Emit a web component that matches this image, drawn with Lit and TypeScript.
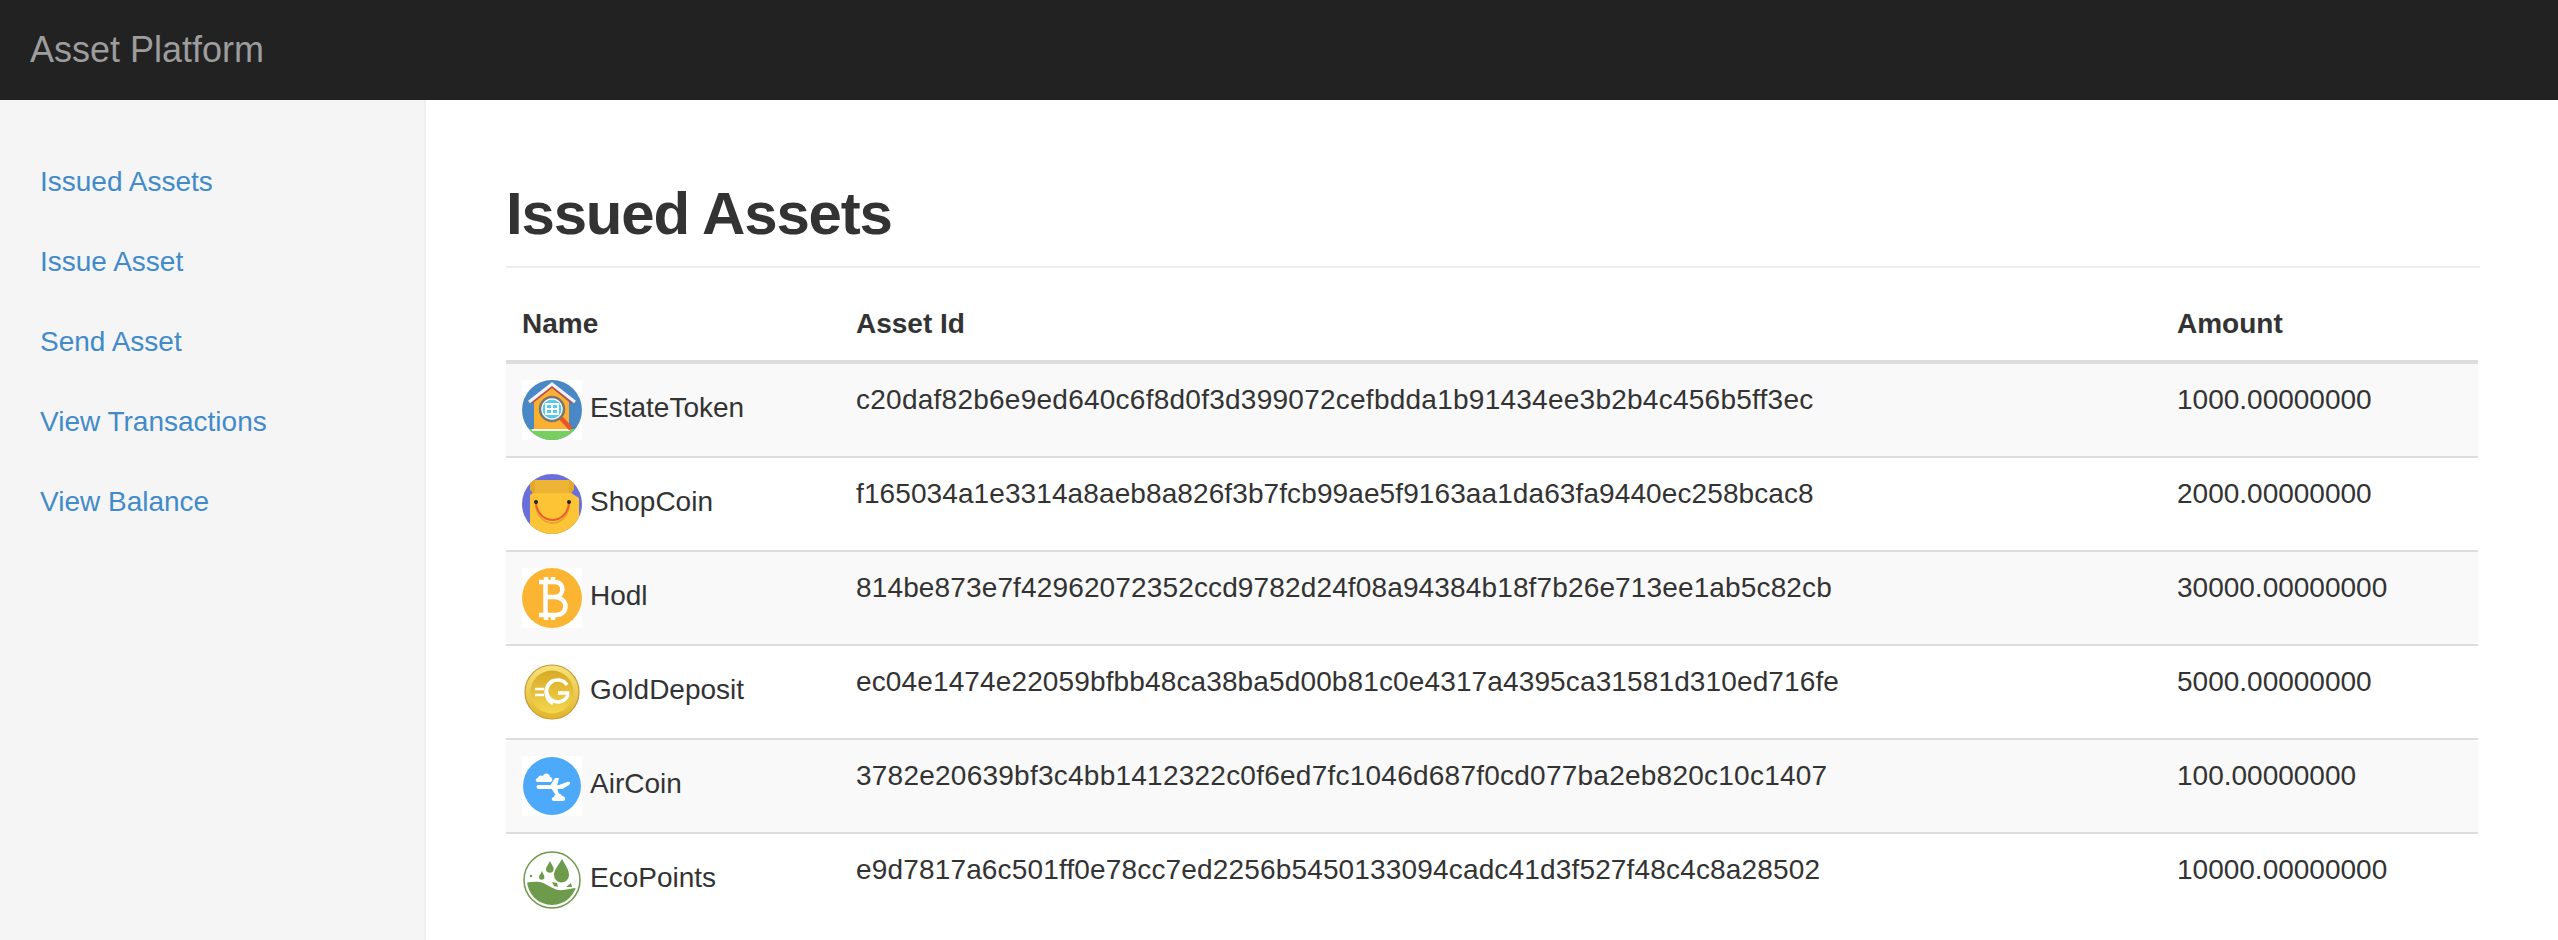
import { LitElement, html, css, svg } from "lit";
import { customElement } from "lit/decorators.js";

const wrap = (body: unknown) => html`<svg class="icon" width="60" height="60" viewBox="0 0 60 60">
  <rect width="60" height="60" fill="#fff"></rect>${body}</svg>`;

const estate = wrap(svg`
  <defs><clipPath id="ce"><circle cx="30" cy="30" r="30"></circle></clipPath></defs>
  <circle cx="30" cy="30" r="30" fill="#4a88c5"></circle>
  <rect x="0" y="49" width="60" height="11" fill="#78cf5e" clip-path="url(#ce)"></rect>
  <path d="M12 22 L30 8 L47 22 V50 H12 Z" fill="#fbb02f"></path>
  <path d="M10 23 L30 7 L50 23" fill="none" stroke="#d9442c" stroke-width="1.5"></path>
  <path d="M7 22 L30 4 L53 22" fill="none" stroke="#f2f2f2" stroke-width="3"></path>
  <rect x="10" y="49" width="38" height="2" fill="#f3f3ee"></rect>
  <path d="M39 38 L49 49" stroke="#e8552a" stroke-width="4.5"></path>
  <circle cx="30" cy="29" r="12" fill="#fff" stroke="#777" stroke-width="2.5"></circle>
  <circle cx="30" cy="29" r="9.500" fill="#5cc6ee"></circle>
  <path d="M24 24 H36 V34 H24 Z M30 24 V34 M24 29 H36" fill="none" stroke="#fff" stroke-width="1.800"></path>
`);

const shop = wrap(svg`
  <defs><clipPath id="cs"><circle cx="30" cy="30" r="30"></circle></clipPath></defs>
  <circle cx="30" cy="30" r="30" fill="#6a6fdb"></circle>
  <g clip-path="url(#cs)">
    <path d="M8 6 H52 L49 21 H11 Z" fill="#edb436"></path>
    <path d="M8 6 L13 6 L13 21 L8 16 Z" fill="#e2a82e"></path>
    <path d="M52 6 L47 6 L47 21 L52 16 Z" fill="#e2a82e"></path>
    <path d="M11 19 H49 L57 24 V60 H8 L8 21 Z" fill="#fdc436"></path>
  </g>
  <path d="M14 31 C15 44 24 49 30.500 49 C37 49 46 44 47 31" fill="none" stroke="#dea72f" stroke-width="2"></path>
  <path d="M14 29 C15 41 24 46 30.500 46 C37 46 46 41 47 29" fill="none" stroke="#ee5c30" stroke-width="2"></path>
  <circle cx="14" cy="28" r="2" fill="#222"></circle>
  <circle cx="47" cy="28" r="2" fill="#222"></circle>
`);

const hodl = wrap(svg`
  <circle cx="30" cy="30" r="30" fill="#fbb533"></circle>
  <path d="M17 14 H33 C43 14 43 29 32 29 H24 M32 29 C47 29 47 47 34 47 H17 M23.500 14 V47 M24 9 V14 M31 9 V14 M24 47 V52 M31 47 V52"
    fill="none" stroke="#fff" stroke-width="4.500"></path>
`);

const gold = wrap(svg`
  <defs>
    <linearGradient id="gg" x1="0" y1="0" x2="0" y2="1">
      <stop offset="0" stop-color="#f7e27a"></stop><stop offset="1" stop-color="#e2b52c"></stop>
    </linearGradient>
    <linearGradient id="gi" x1="0" y1="0" x2="0" y2="1">
      <stop offset="0" stop-color="#d7aa26"></stop><stop offset="1" stop-color="#f3d64f"></stop>
    </linearGradient>
  </defs>
  <circle cx="30" cy="30" r="27" fill="url(#gg)" stroke="#c39a33" stroke-width="1.2"></circle>
  <circle cx="30" cy="30" r="21.500" fill="url(#gi)"></circle>
  <path d="M31 18.500 A13 13 0 0 0 31 41.500" fill="none" stroke="#fff" stroke-width="3.500"></path>
  <path d="M13 27 H22 M13 33 H22" stroke="#fff" stroke-width="2.500"></path>
  <path d="M45 23 A11 11 0 1 0 45.500 34 V31 H36" fill="none" stroke="#fff" stroke-width="3.500"></path>
`);

const air = wrap(svg`
  <circle cx="30" cy="30" r="29" fill="#4da9fa"></circle>
  <path d="M16 29 H37 L45 26 C48 25 49 27 47 29 L42 32 C41 33 40 33 38 33 H17 C14 33 14 29 16 29 Z" fill="#fff"></path>
  <path d="M28 30 L33 22 H37 L35 30 Z M29 32 L33 38 H37 L35 32 Z" fill="#fff"></path>
  <path d="M16 26 C13 26 13 22 16 22 C16 19 20 19 21 20 C22 16 28 17 28 21 C31 21 31 26 28 26 Z" fill="#fff"></path>
  <path d="M32 45 C29 45 29 41 32 41 C32 37 39 36 40 40 C44 40 44 45 41 45 Z" fill="#fff"></path>
`);

const eco = wrap(svg`
  <defs><clipPath id="cc"><circle cx="30" cy="30" r="25"></circle></clipPath></defs>
  <circle cx="30" cy="30" r="28" fill="#fff" stroke="#6d9a4b" stroke-width="1.500"></circle>
  <path d="M0 33 C8 32 15 31 21 33 C28 36 33 41 41 40 C47 39 52 38 60 37 V60 H0 Z" fill="#6d9a4b" clip-path="url(#cc)"></path>
  <path d="M40 9 C36 16 32 20 32 25 A7.500 7.500 0 0 0 47 25 C47 20 44 16 40 9 Z" fill="#6d9a4b"></path>
  <path d="M28 11 C26 15 24 17 24 19 A3.800 3.800 0 0 0 31.600 19 C31.600 17 30 15 28 11 Z" fill="#6d9a4b"></path>
  <path d="M20 21 C19 24 17 25 17 27 A2.700 2.700 0 0 0 22.400 27 C22.400 25 21 24 20 21 Z" fill="#6d9a4b"></path>
  <circle cx="9" cy="26" r="1.200" fill="#6d9a4b"></circle>
  <path d="M30 32 L35 33 L36 37 L32 36 Z M44 37 L49 33 L50 37 Z" fill="#6d9a4b"></path>
`);

const rows = [
  { icon: estate, name: "EstateToken", id: "c20daf82b6e9ed640c6f8d0f3d399072cefbdda1b91434ee3b2b4c456b5ff3ec", amount: "1000.00000000", track: 0.25 },
  { icon: shop, name: "ShopCoin", id: "f165034a1e3314a8aeb8a826f3b7fcb99ae5f9163aa1da63fa9440ec258bcac8", amount: "2000.00000000", track: 0.1 },
  { icon: hodl, name: "Hodl", id: "814be873e7f42962072352ccd9782d24f08a94384b18f7b26e713ee1ab5c82cb", amount: "30000.00000000", track: 0.14 },
  { icon: gold, name: "GoldDeposit", id: "ec04e1474e22059bfbb48ca38ba5d00b81c0e4317a4395ca31581d310ed716fe", amount: "5000.00000000", track: 0.13 },
  { icon: air, name: "AirCoin", id: "3782e20639bf3c4bb1412322c0f6ed7fc1046d687f0cd077ba2eb820c10c1407", amount: "100.00000000", track: 0.24 },
  { icon: eco, name: "EcoPoints", id: "e9d7817a6c501ff0e78cc7ed2256b5450133094cadc41d3f527f48c4c8a28502", amount: "10000.00000000", track: 0.16 },
];

const links = ["Issued Assets", "Issue Asset", "Send Asset", "View Transactions", "View Balance"];

@customElement("app-root")
export class AppRoot extends LitElement {
  static styles = css`
    :host {
      display: flex;
      flex-direction: column;
      height: 100vh;
      overflow: hidden;
      font-family: "Liberation Sans", Arial, sans-serif;
      font-size: 28px;
      line-height: 40px;
      color: #333;
    }
    .navbar {
      flex: none;
      height: 100px;
      background: #222;
      display: flex;
      align-items: center;
      padding-left: 30px;
      color: #9d9d9d;
      font-size: 36px;
    }
    .body {
      flex: 1;
      display: flex;
      min-height: 0;
    }
    .sidebar {
      flex: none;
      box-sizing: border-box;
      width: 426px;
      padding-top: 42px;
      background: #f5f5f5;
      border-right: 2px solid #eee;
      display: flex;
      flex-direction: column;
    }
    .sidebar a {
      padding: 20px 40px;
      color: #428bca;
      text-decoration: none;
    }
    .main {
      flex: 1;
      min-width: 0;
      padding: 40px 78px 0 80px;
    }
    h1 {
      margin: 34px 0 20px;
      padding-bottom: 13px;
      border-bottom: 2px solid #eee;
      font-size: 60px;
      line-height: 79px;
      font-weight: 700;
      letter-spacing: -1.2px;
    }
    table {
      width: 1972px;
      table-layout: fixed;
      border-collapse: collapse;
    }
    th, td {
      padding: 16px;
      text-align: left;
      vertical-align: top;
    }
    th {
      font-weight: 700;
      border-bottom: 4px solid #ddd;
    }
    td {
      border-top: 2px solid #ddd;
    }
    tbody tr:first-child td {
      border-top: 0;
    }
    tbody tr:nth-child(odd) td {
      background: #f9f9f9;
    }
    .c1 { width: 334px; }
    .c2 { width: 1321px; }
    .c3 { width: 317px; }
    .icon {
      vertical-align: middle;
      margin-right: 8px;
    }
  `;

  render() {
    return html`
      <div class="navbar">Asset Platform</div>
      <div class="body">
        <nav class="sidebar">
          ${links.map((l) => html`<a href="#">${l}</a>`)}
        </nav>
        <main class="main">
          <h1>Issued Assets</h1>
          <table>
            <colgroup>
              <col class="c1" /><col class="c2" /><col class="c3" />
            </colgroup>
            <thead>
              <tr><th>Name</th><th>Asset Id</th><th>Amount</th></tr>
            </thead>
            <tbody>
              ${rows.map(
                (r) => html`<tr>
                  <td>${r.icon}${r.name}</td>
                  <td style="letter-spacing:${r.track}px">${r.id}</td>
                  <td>${r.amount}</td>
                </tr>`
              )}
            </tbody>
          </table>
        </main>
      </div>
    `;
  }
}
